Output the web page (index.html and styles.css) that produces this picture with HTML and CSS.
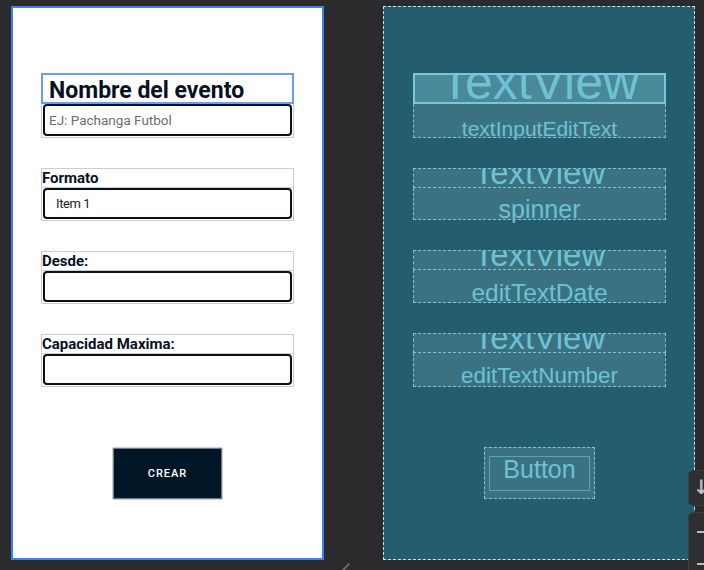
FILE: index.html
```html
<!DOCTYPE html>
<html>
<head>
<meta charset="utf-8">
<link rel="stylesheet" href="styles.css">
</head>
<body>
<div class="canvas">
  <div class="screen design">
    <div class="form">
      <div class="group">
        <div class="title">Nombre del evento</div>
        <div class="box tall"><div class="inner"><span class="hint">EJ: Pachanga Futbol</span></div></div>
      </div>
      <div class="group">
        <div class="label">Formato</div>
        <div class="box"><div class="inner"><span class="item">Item 1</span></div></div>
      </div>
      <div class="group">
        <div class="label">Desde:</div>
        <div class="box"><div class="inner"></div></div>
      </div>
      <div class="group">
        <div class="label">Capacidad Maxima:</div>
        <div class="box"><div class="inner"></div></div>
      </div>
      <div class="btn-wrap"><div class="btn">CREAR</div></div>
    </div>
  </div>
  <div class="screen blueprint">
    <div class="form">
      <div class="group">
        <div class="bp-title">TextView</div>
        <div class="bp-box tall">textInputEditText</div>
      </div>
      <div class="group">
        <div class="bp-label">TextView</div>
        <div class="bp-box sp">spinner</div>
      </div>
      <div class="group">
        <div class="bp-label">TextView</div>
        <div class="bp-box dt">editTextDate</div>
      </div>
      <div class="group">
        <div class="bp-label">TextView</div>
        <div class="bp-box nm">editTextNumber</div>
      </div>
      <div class="btn-wrap"><div class="bp-btn"><div class="bp-btn-inner">Button</div></div></div>
    </div>
  </div>
</div>
<div class="resize"></div>
<div class="zoom-ctl ctl-a"><span class="arrow">&#8595;</span></div>
<div class="zoom-ctl ctl-b"><span class="minus m1"></span><span class="minus m2"></span></div>
</body>
</html>
```
FILE: styles.css
```css
* { box-sizing: border-box; }
html, body { margin: 0; padding: 0; }
body {
  width: 704px;
  height: 570px;
  overflow: hidden;
  background: #2b2b2d;
  position: relative;
  font-family: Roboto, "Liberation Sans", sans-serif;
}
.canvas {
  display: flex;
  gap: 59px;
  padding: 6px 0 0 11px;
}
.screen {
  width: 313px;
  height: 554px;
  overflow: hidden;
}
.design {
  background: #fff;
  border: 2px solid #3b82f0;
  padding: 65px 0 0 28px;
}
.blueprint {
  width: 312px;
  background: #245d6e;
  border: 1px dashed #d4e2e8;
  padding: 66px 0 0 29px;
}
.form {
  display: flex;
  flex-direction: column;
  gap: 30px;
  width: 253px;
}
.group { display: flex; flex-direction: column; }
.title {
  height: 31px;
  border: 2px solid #6a9cf6;
  font-weight: 700;
  font-size: 23px;
  line-height: 27px;
  padding-top: 2px;
  color: #06121f;
  padding-left: 6px;
  white-space: nowrap;
}
.label {
  height: 20px;
  border: 1px solid #cdcdcd;
  font-weight: 700;
  font-size: 15px;
  line-height: 18px;
  color: #06121f;
  white-space: nowrap;
}
.box {
  height: 33px;
  border: 1px solid #cdcdcd;
  border-top: none;
  padding: 0 1px 1px 1px;
}
.box.tall { height: 34px; }
.inner {
  height: 100%;
  border: 2px solid #05131f;
  border-radius: 4px;
  display: flex;
  align-items: center;
}
.hint {
  font-size: 13.5px;
  color: #6d6d6d;
  padding-left: 4px;
}
.item {
  font-size: 13px;
  letter-spacing: -0.4px;
  color: #222;
  padding-left: 11px;
}
.btn-wrap {
  display: flex;
  justify-content: center;
  margin-top: 30px;
}
.btn {
  width: 111px;
  height: 53px;
  border: 1px solid #cfcfcf;
  background: #011627;
  box-shadow: inset 0 0 0 1px #6f7a84;
  color: #fff;
  font-size: 11px;
  font-weight: 500;
  letter-spacing: 1px;
  display: flex;
  align-items: center;
  justify-content: center;
  border-radius: 2px;
}
/* blueprint */
.blueprint .form { font-family: "Liberation Sans", Arial, sans-serif; color: #6fc1d6; }
.bp-title {
  height: 31px;
  border: 2px solid #7ac6da;
  background: #4a8999;
  text-align: center;
  font-size: 50px;
  line-height: 15px;
  overflow: hidden;
  white-space: nowrap;
}
.bp-label {
  height: 20px;
  border: 1px dashed #7ac6da;
  background: #3a7282;
  text-align: center;
  font-size: 33px;
  line-height: 7px;
  overflow: hidden;
  white-space: nowrap;
}
.bp-box {
  height: 33px;
  border: 1px dashed #7ac6da;
  border-top: none;
  background: #3a7282;
  text-align: center;
  white-space: nowrap;
}
.bp-box.tall { height: 34px; font-size: 21px; line-height: 49px; }
.bp-box.sp { height: 32px; font-size: 25px; line-height: 43px; }
.bp-box.dt { font-size: 24.5px; line-height: 46px; }
.bp-box.nm { height: 34px; font-size: 22.4px; line-height: 46px; }
.bp-btn {
  width: 111px;
  height: 52px;
  border: 1px dashed #7ac6da;
  background: #3a7282;
  padding: 8px 4px 7px 4px;
}
.bp-btn-inner {
  height: 100%;
  border: 1px solid #5fa2b4;
  text-align: center;
  font-size: 25px;
  line-height: 25px;
  color: #6fc1d6;
}
.resize {
  position: absolute;
  left: 339px;
  top: 567px;
  width: 12px;
  height: 2px;
  background: #6a6a6a;
  transform: rotate(-45deg);
}
.zoom-ctl {
  position: absolute;
  left: 688px;
  width: 30px;
  background: #2e2f31;
  border: 1px solid #3c3d40;
  border-radius: 5px;
}
.ctl-a { top: 470px; height: 36px; }
.ctl-b { top: 512px; height: 70px; }
.arrow {
  position: absolute;
  left: 4px;
  top: 5px;
  color: #bdbdbd;
  font-size: 20px;
  font-weight: 700;
  font-family: "DejaVu Sans", sans-serif;
  line-height: 22px;
}
.minus {
  position: absolute;
  left: 8px;
  width: 8px;
  height: 2px;
  background: #bdbdbd;
}
.m1 { top: 18px; }
.m2 { top: 50px; }
```
